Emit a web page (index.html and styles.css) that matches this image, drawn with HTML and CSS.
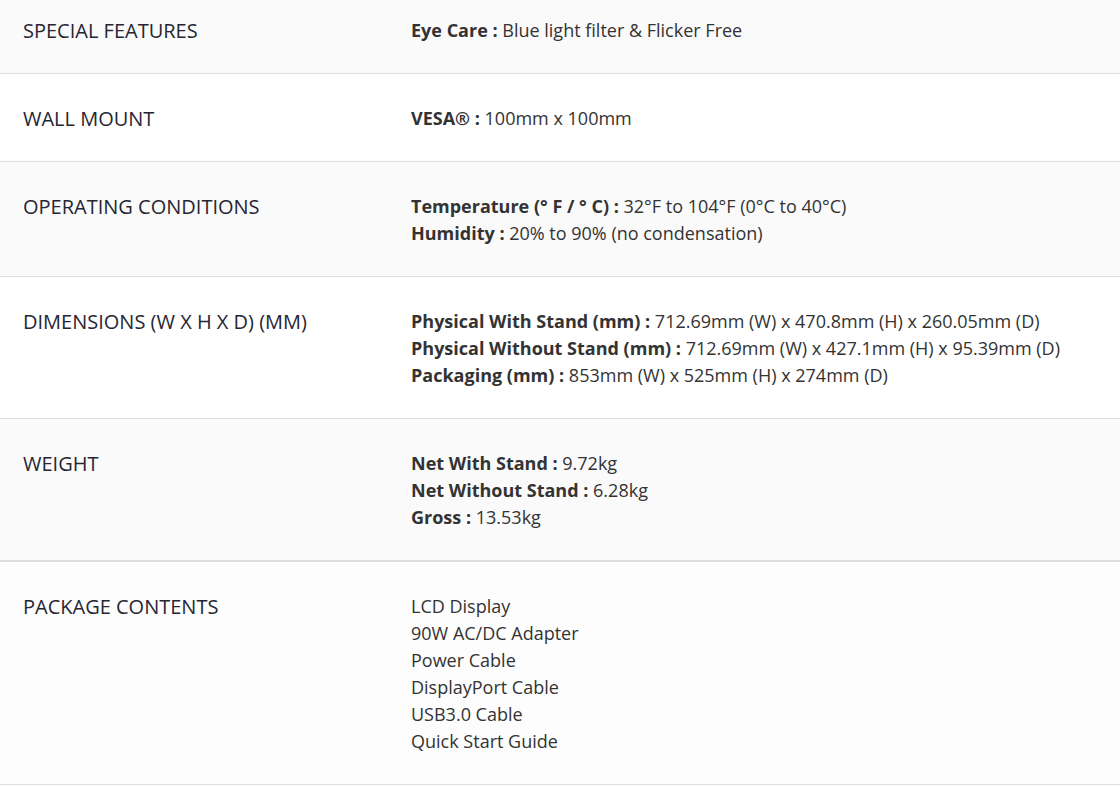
FILE: index.html
```html
<!DOCTYPE html>
<html lang="en">
<head>
<meta charset="utf-8">
<title>Specifications</title>
<link rel="stylesheet" href="styles.css">
</head>
<body>
<div class="specs">
  <div class="row alt">
    <div class="label">SPECIAL FEATURES</div>
    <div class="value"><b>Eye Care :</b> Blue light filter &amp; Flicker Free</div>
  </div>
  <div class="row">
    <div class="label">WALL MOUNT</div>
    <div class="value"><b>VESA® :</b> 100mm x 100mm</div>
  </div>
  <div class="row alt">
    <div class="label">OPERATING CONDITIONS</div>
    <div class="value">
      <div><b>Temperature (° F / ° C) :</b> 32°F to 104°F (0°C to 40°C)</div>
      <div><b>Humidity :</b> 20% to 90% (no condensation)</div>
    </div>
  </div>
  <div class="row">
    <div class="label">DIMENSIONS (W X H X D) (MM)</div>
    <div class="value">
      <div><b>Physical With Stand (mm) :</b> 712.69mm (W) x 470.8mm (H) x 260.05mm (D)</div>
      <div><b>Physical Without Stand (mm) :</b> 712.69mm (W) x 427.1mm (H) x 95.39mm (D)</div>
      <div><b>Packaging (mm) :</b> 853mm (W) x 525mm (H) x 274mm (D)</div>
    </div>
  </div>
  <div class="row alt">
    <div class="label">WEIGHT</div>
    <div class="value">
      <div><b>Net With Stand :</b> 9.72kg</div>
      <div><b>Net Without Stand :</b> 6.28kg</div>
      <div><b>Gross :</b> 13.53kg</div>
    </div>
  </div>
  <div class="row last">
    <div class="label">PACKAGE CONTENTS</div>
    <div class="value">
      <div>LCD Display</div>
      <div>90W AC/DC Adapter</div>
      <div>Power Cable</div>
      <div>DisplayPort Cable</div>
      <div>USB3.0 Cable</div>
      <div>Quick Start Guide</div>
    </div>
  </div>
</div>
</body>
</html>
```
FILE: styles.css
```css
html, body {
  margin: 0;
  padding: 0;
  background: #ffffff;
}
body {
  font-family: "Open Sans", "Liberation Sans", sans-serif;
  color: #333333;
  overflow: hidden;
}
.specs {
  margin-top: -14px;
}
.row {
  display: grid;
  grid-template-columns: 388px 1fr;
  padding: 31px 0 29px 23px;
  border-bottom: 1px solid #dddddd;
  background: #ffffff;
}
.row.alt {
  background: #fafafa;
}
.row.last {
  background: #fdfdfd;
  border-top: 1px solid #dddddd;
}
.label {
  font-size: 20px;
  line-height: 27px;
  color: #262633;
}
.value {
  font-size: 18px;
  line-height: 27px;
  color: #333333;
}
.value b {
  font-weight: 700;
}
```
